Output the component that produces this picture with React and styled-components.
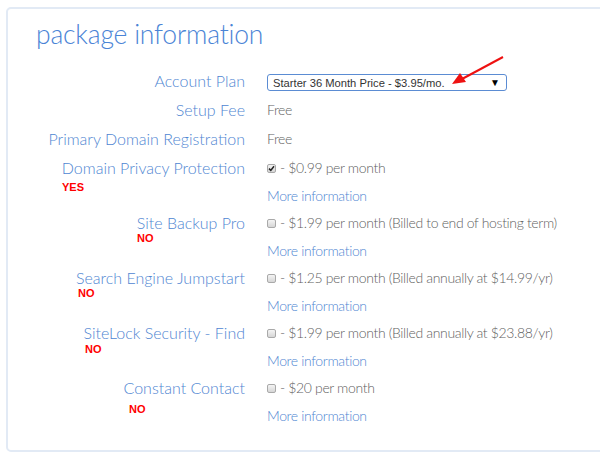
import React from "react";
import styled, { createGlobalStyle } from "styled-components";

const GlobalStyle = createGlobalStyle`
  html, body {
    margin: 0;
    padding: 0;
    background: #ffffff;
    overflow: hidden;
  }
  body {
    font-family: Lato, "Open Sans", sans-serif;
  }
`;

const Page = styled.div`
  position: relative;
  width: 600px;
  height: 460px;
  overflow: hidden;
  padding: 7px 0 0 6px;
  box-sizing: border-box;
`;

const Card = styled.section`
  width: 640px;
  height: 445px;
  box-sizing: border-box;
  border: 2px solid #e2eaf5;
  border-radius: 5px;
  padding-top: 9px;
`;

const Title = styled.h1`
  margin: 0 0 15px 28px;
  font-family: Lato, sans-serif;
  font-weight: 300;
  font-size: 26.5px;
  line-height: 33px;
  color: #4a84d6;
  letter-spacing: -0.2px;
`;

const Row = styled.div`
  display: grid;
  grid-template-columns: 237px 1fr;
  column-gap: 22px;
  height: ${({ $h }) => $h}px;
`;

const LabelCell = styled.div`
  display: flex;
  flex-direction: column;
`;

const Label = styled.div`
  text-align: right;
  font-size: 16px;
  line-height: 29px;
  font-weight: 300;
  color: #4f86d2;
  white-space: nowrap;
`;

const Note = styled.span`
  font-family: "Liberation Sans", Arial, sans-serif;
  font-weight: bold;
  font-size: 11px;
  line-height: 11px;
  color: #ff0000;
  margin-left: ${({ $x }) => $x}px;
  margin-top: ${({ $y }) => $y}px;
`;

const ValueCell = styled.div`
  display: flex;
  flex-direction: column;
  align-items: flex-start;
`;

const Value = styled.div`
  font-size: 14px;
  letter-spacing: -0.35px;
  line-height: 30px;
  font-weight: 300;
  color: #5f5f5f;
  white-space: nowrap;
  display: flex;
  align-items: center;
`;

const Select = styled.div`
  margin-top: 8px;
  width: 240px;
  height: 17px;
  box-sizing: border-box;
  border: 1px solid #5b8cd3;
  border-radius: 3px;
  display: flex;
  align-items: center;
  justify-content: space-between;
  padding: 0 6px 0 5px;
  font-family: "Liberation Sans", Arial, sans-serif;
  font-size: 11.2px;
  color: #333333;
  background: #ffffff;
`;

const Caret = styled.span`
  font-size: 10px;
  color: #000000;
`;

const Box = styled.span`
  width: 9px;
  height: 9px;
  box-sizing: border-box;
  border: 1px solid #a9a9a9;
  border-radius: 2px;
  background: linear-gradient(#f4f4f4, #d6d6d6);
  margin-right: 4px;
  display: inline-flex;
  align-items: center;
  justify-content: center;
`;

const MoreLink = styled.a`
  margin-top: 1px;
  font-size: 14px;
  letter-spacing: -0.35px;
  line-height: 24px;
  font-weight: 300;
  color: #4f86d2;
  text-decoration: none;
  white-space: nowrap;
`;

const Arrow = styled.svg`
  position: absolute;
  left: 440px;
  top: 50px;
`;

const Check = ({ checked }) => (
  <Box>
    {checked && (
      <svg width="7" height="7" viewBox="0 0 7 7">
        <path d="M1 3.6 L2.8 5.4 L6 1.2" fill="none" stroke="#222" strokeWidth="1.5" />
      </svg>
    )}
  </Box>
);

const options = [
  { label: "Domain Privacy Protection", price: "- $0.99 per month", checked: true, note: "YES", x: 54, y: 0 },
  { label: "Site Backup Pro", price: "- $1.99 per month (Billed to end of hosting term)", note: "NO", x: 129, y: -4 },
  { label: "Search Engine Jumpstart", price: "- $1.25 per month (Billed annually at $14.99/yr)", note: "NO", x: 70, y: -4 },
  { label: "SiteLock Security - Find", price: "- $1.99 per month (Billed annually at $23.88/yr)", note: "NO", x: 77, y: -3 },
  { label: "Constant Contact", price: "- $20 per month", note: "NO", x: 121, y: 2 },
];

const App = () => (
  <Page>
    <GlobalStyle />
    <Card>
      <Title>package information</Title>
      <Row $h={29}>
        <Label>Account Plan</Label>
        <ValueCell>
          <Select>
            <span>Starter 36 Month Price - $3.95/mo.</span>
            <Caret>▼</Caret>
          </Select>
        </ValueCell>
      </Row>
      <Row $h={29}>
        <Label>Setup Fee</Label>
        <Value>Free</Value>
      </Row>
      <Row $h={29}>
        <Label>Primary Domain Registration</Label>
        <Value>Free</Value>
      </Row>
      {options.map((o) => (
        <Row key={o.label} $h={55}>
          <LabelCell>
            <Label>{o.label}</Label>
            <Note $x={o.x} $y={o.y}>{o.note}</Note>
          </LabelCell>
          <ValueCell>
            <Value>
              <Check checked={o.checked} />
              {o.price}
            </Value>
            <MoreLink href="#">More information</MoreLink>
          </ValueCell>
        </Row>
      ))}
    </Card>
    <Arrow width="70" height="40" viewBox="0 0 70 40">
      <line x1="63" y1="7" x2="22" y2="29" stroke="#ee1111" strokeWidth="2" />
      <polygon points="12,34 20,23 26,32" fill="#ee1111" />
    </Arrow>
  </Page>
);

export default App;
